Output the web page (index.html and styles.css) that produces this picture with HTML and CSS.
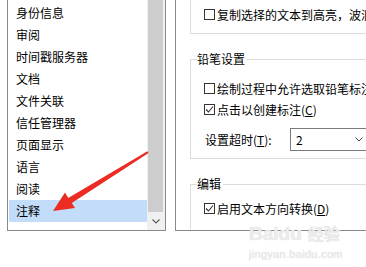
FILE: index.html
```html
<!DOCTYPE html>
<html lang="zh-CN">
<head>
    <meta charset="UTF-8">
    <title>首选项 - 注释</title>
    <link rel="stylesheet" href="styles.css">
</head>
<body>
    <div class="screen">
        <div class="list-box">
            <ul class="list">
                <li>身份信息</li>
                <li>审阅</li>
                <li>时间戳服务器</li>
                <li>文档</li>
                <li>文件关联</li>
                <li>信任管理器</li>
                <li>页面显示</li>
                <li>语言</li>
                <li>阅读</li>
                <li class="selected">注释</li>
            </ul>
            <div class="scrollbar">
                <div class="thumb"></div>
                <div class="scroll-down">
                    <svg width="8" height="5" viewBox="0 0 8 5"><path d="M0.5 0.5 L4 4 L7.5 0.5" fill="none" stroke="#606060" stroke-width="1.2"/></svg>
                </div>
            </div>
        </div>

        <div class="settings">
            <div class="group group-top">
                <div class="group-body">
                    <label class="check"><span class="box"></span>复制选择的文本到高亮，波浪线和删除线注释</label>
                </div>
            </div>

            <div class="group">
                <div class="group-title"><span>铅笔设置</span></div>
                <div class="group-body pencil">
                    <label class="check"><span class="box"></span>绘制过程中允许选取铅笔标注</label>
                    <label class="check"><span class="box checked"><svg width="9" height="9" viewBox="0 0 9 9"><path d="M1 4.5 L3.5 7 L8 1.5" fill="none" stroke="#333" stroke-width="1.1"/></svg></span>点击以创建标注(<u>C</u>)</label>
                    <div class="field">
                        <span class="field-label">设置超时(<u>T</u>):</span>
                        <div class="select">
                            <span>2</span>
                            <svg width="8" height="5" viewBox="0 0 8 5"><path d="M0.5 0.5 L4 4 L7.5 0.5" fill="none" stroke="#444" stroke-width="1"/></svg>
                        </div>
                    </div>
                </div>
            </div>

            <div class="group">
                <div class="group-title"><span>编辑</span></div>
                <div class="group-body edit">
                    <label class="check"><span class="box checked"><svg width="9" height="9" viewBox="0 0 9 9"><path d="M1 4.5 L3.5 7 L8 1.5" fill="none" stroke="#333" stroke-width="1.1"/></svg></span>启用文本方向转换(<u>D</u>)</label>
                </div>
            </div>
        </div>

        <svg class="arrow" width="366" height="267" viewBox="0 0 366 267">
            <polygon points="53,211 75,208 71.8,203 148.6,153 147.4,151.2 68.2,198 65,192.5" fill="#ec2b23"/>
        </svg>

        <div class="watermark">
            <div class="wm-logo">Bai<span class="paw">du</span><span class="wm-cn">经验</span></div>
            <div class="wm-url">jingyan.baidu.com</div>
        </div>
    </div>
</body>
</html>
```

FILE: styles.css
```css
body {
    margin: 0;
    background: #fff;
    color: #000;
    font-family: "Noto Sans CJK SC", "Microsoft YaHei", sans-serif;
    font-size: 12px;
}

.screen {
    position: relative;
    display: flex;
    align-items: flex-start;
    width: 366px;
    height: 267px;
    overflow: hidden;
}

/* left category list */
.list-box {
    flex-shrink: 0;
    display: flex;
    width: 159px;
    height: 231px;
    margin-left: 7px;
    box-sizing: border-box;
    border: 1px solid #8a8a8a;
    border-top: none;
}

.list {
    list-style: none;
    margin: 0;
    padding: 2px 0 0 1px;
    width: 139px;
    box-sizing: border-box;
}

.list li {
    height: 22px;
    line-height: 22px;
    padding-left: 7px;
    white-space: nowrap;
}

.list li.selected {
    background: #c2dcf9;
}

.scrollbar {
    flex: 1;
    display: flex;
    flex-direction: column;
    padding: 0 2px 0 1px;
    background: #f0f0f0;
}

.thumb {
    flex: 1;
    background: #cdcdcd;
}

.scroll-down {
    height: 18px;
    display: flex;
    align-items: center;
    justify-content: center;
}

/* right settings panel */
.settings {
    flex-shrink: 0;
    width: 220px;
    height: 231px;
    margin-left: 9px;
    box-sizing: border-box;
    border-left: 1px solid #8a8a8a;
    border-bottom: 1px solid #8a8a8a;
    overflow: hidden;
}

.group {
    width: 260px;
    margin: 18px 0 0 14px;
}

.group-top {
    margin-top: 0;
}

.group-title {
    display: flex;
    height: 14px;
    line-height: 14px;
}

.group-title::before,
.group-title::after {
    content: "";
    align-self: flex-end;
    height: 7px;
    box-sizing: border-box;
    border-top: 1px solid #dcdcdc;
}

.group-title::before {
    width: 7px;
    border-left: 1px solid #dcdcdc;
}

.group-title::after {
    flex: 1;
    margin-left: 2px;
    border-right: 1px solid #dcdcdc;
}

.group-body {
    border: 1px solid #dcdcdc;
    border-top: none;
    padding-left: 13px;
}

.group-top .group-body {
    height: 34px;
    box-sizing: border-box;
    padding-top: 4px;
}

.pencil {
    padding-top: 12px;
    padding-bottom: 7px;
}

.pencil .check {
    height: 21px;
}

.edit {
    padding-top: 7px;
    height: 60px;
}

.check {
    display: flex;
    align-items: center;
    height: 20px;
    white-space: nowrap;
}

.box {
    width: 11px;
    height: 11px;
    margin-right: 2px;
    box-sizing: border-box;
    border: 1px solid #333;
    background: #fff;
    display: flex;
    align-items: center;
    justify-content: center;
    flex-shrink: 0;
}

.box svg {
    display: block;
}

.field {
    display: flex;
    align-items: center;
    margin-top: 8px;
    height: 23px;
    white-space: nowrap;
}

.field-label {
    width: 85px;
    padding-left: 1px;
}

.select {
    display: flex;
    align-items: center;
    justify-content: space-between;
    width: 80px;
    height: 23px;
    box-sizing: border-box;
    padding: 0 6px 0 5px;
    border: 1px solid #7a7a7a;
}

/* overlays */
.arrow {
    position: absolute;
    left: 0;
    top: 0;
    pointer-events: none;
}

.watermark {
    position: absolute;
    left: 249px;
    top: 222px;
    color: #ececec;
    text-shadow: 0 0 1px #d2d2d2;
    font-family: "Liberation Sans", Arial, sans-serif;
}

.wm-logo {
    font-size: 19px;
    font-weight: bold;
    line-height: 22px;
    white-space: nowrap;
}

.wm-cn {
    font-family: "Noto Sans CJK SC", sans-serif;
    font-size: 16px;
    margin-left: 6px;
}

.wm-url {
    font-size: 11px;
    line-height: 14px;
    margin-top: 2px;
    letter-spacing: 0.3px;
}
```
